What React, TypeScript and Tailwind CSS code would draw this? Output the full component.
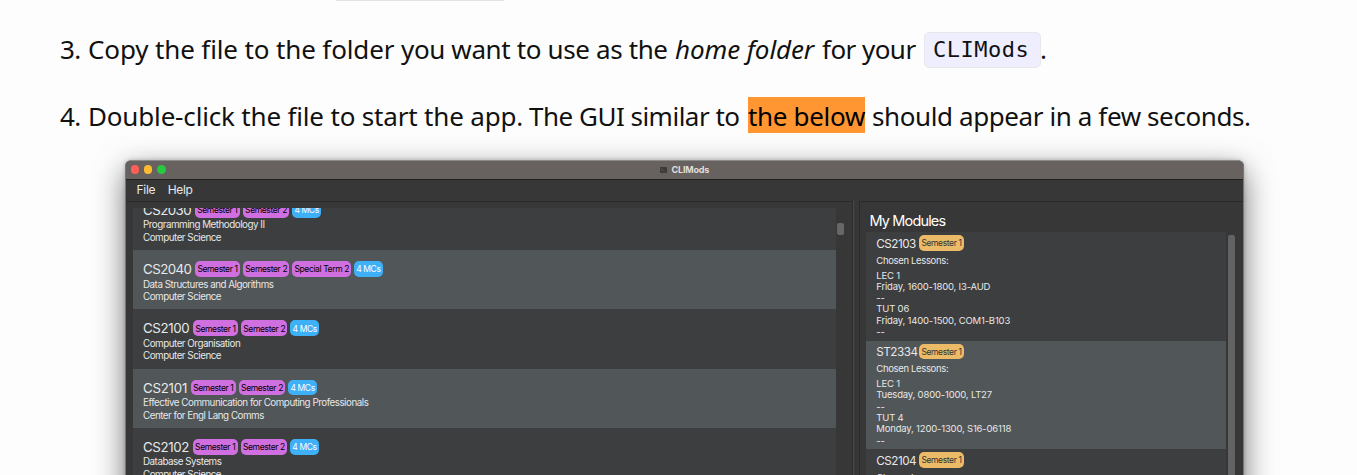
import type { ReactNode } from "react";

type Module = { code: string; tracking: string; tags: string[]; title: string; dept: string };

const modules: Module[] = [
  { code: "CS2030", tracking: "tracking-[-0.55px]", tags: ["Semester 1", "Semester 2"], title: "Programming Methodology II", dept: "Computer Science" },
  { code: "CS2040", tracking: "tracking-[-0.55px]", tags: ["Semester 1", "Semester 2", "Special Term 2"], title: "Data Structures and Algorithms", dept: "Computer Science" },
  { code: "CS2100", tracking: "tracking-[-0.4px]", tags: ["Semester 1", "Semester 2"], title: "Computer Organisation", dept: "Computer Science" },
  { code: "CS2101", tracking: "tracking-[-0.25px]", tags: ["Semester 1", "Semester 2"], title: "Effective Communication for Computing Professionals", dept: "Center for Engl Lang Comms" },
  { code: "CS2102", tracking: "tracking-[-0.4px]", tags: ["Semester 1", "Semester 2"], title: "Database Systems", dept: "Computer Science" },
];

const codeWidths: Record<string, string> = {
  CS2030: "w-[51.8px]",
  CS2040: "w-[52px]",
  CS2100: "w-[50px]",
  CS2101: "w-[47.8px]",
  CS2102: "w-[49.7px]",
};

const tagWidths: Record<string, string> = {
  "Semester 1": "w-[45px]",
  "Semester 2": "w-[46.3px]",
  "Special Term 2": "w-[58.5px]",
};

const chosen = [
  { code: "CS2103", lines: ["LEC 1", "Friday, 1600-1800, I3-AUD", "--", "TUT 06", "Friday, 1400-1500, COM1-B103", "--"] },
  { code: "ST2334", lines: ["LEC 1", "Tuesday, 0800-1000, LT27", "--", "TUT 4", "Monday, 1200-1300, S16-06118", "--"] },
  { code: "CS2104", lines: ["LEC 1"] },
];

function Badge({ className, children }: { className: string; children: ReactNode }) {
  return (
    <span className={`flex h-[15.6px] shrink-0 items-center justify-center rounded-[5px] pt-px text-[8.5px] leading-none tracking-[-0.38px] ${className}`}>
      {children}
    </span>
  );
}

function ModuleRow({ module, shaded }: { module: Module; shaded: boolean }) {
  return (
    <div className={`h-[59.25px] shrink-0 pt-[11px] pl-[10px] ${shaded ? "bg-[#515658]" : "bg-[#3c3e3f]"}`}>
      <div className="flex h-4 items-center gap-[3.1px]">
        <span className={`${codeWidths[module.code]} -mr-[3.1px] text-[13.3px] leading-4 ${module.tracking}`}>{module.code}</span>
        {module.tags.map((tag) => (
          <Badge key={tag} className={`bg-[#d070e0] text-black ${tagWidths[tag]}`}>{tag}</Badge>
        ))}
        <Badge className="w-[28.6px] bg-[#3eb0f7] text-white">4 MCs</Badge>
      </div>
      <div className="pt-[1.6px] text-[9.8px] leading-[12.6px] tracking-[-0.48px]">
        <div>{module.title}</div>
        <div>{module.dept}</div>
      </div>
    </div>
  );
}

export default function App() {
  return (
    <main className="h-[475px] w-full overflow-hidden bg-[#fdfdfd] font-['Noto_Sans',sans-serif] text-[26px] leading-9 text-[#111]">
      <div className="ml-[336px] h-px w-[168px] bg-[#e3e3e3]" />
      <p className="mt-[30px] ml-[60px] flex h-9 whitespace-nowrap">
        <span className="w-[28px] tracking-[-0.5px]">3.</span>
        <span className="w-[313px] tracking-[-0.13px]">Copy the file to the folder</span>
        <span className="w-[274px] tracking-[-0.37px]">you want to use as the</span>
        <em className="w-[147px] tracking-[-0.1px]">home folder</em>
        <span className="w-[102px] tracking-[-0.55px]">for your</span>
        <code className="mt-px flex h-9 w-[117px] items-center rounded-[5px] border border-[#e7e7ee] bg-[#eeeeff] pl-[8px] font-['DejaVu_Sans_Mono',monospace] text-[22px] tracking-[0.5px]">CLIMods</code>
        <span className="-ml-px">.</span>
      </p>
      <p className="mt-[30px] ml-[60px] flex h-9 whitespace-nowrap leading-[38px]">
        <span className="w-[28px] tracking-[-0.5px]">4.</span>
        <span className="w-[441px] tracking-[-0.17px]">Double-click the file to start the app.</span>
        <span className="w-[219px] tracking-[-0.5px]">The GUI similar to</span>
        <mark className="mr-2 w-[117px] bg-[#ff9632] tracking-[-0.32px] text-black">the below</mark>
        <span className="-ml-px tracking-[-0.4px]">should appear in a few seconds.</span>
      </p>

      <section className="mt-[27px] ml-[125px] flex h-[400px] w-[1119px] flex-col overflow-hidden rounded-t-[6px] border border-[#777] border-t-[#8b8b89] bg-[#373737] font-['Inter',sans-serif] text-[#e8e8e8] shadow-[0_10px_30px_rgba(0,0,0,0.55),0_0_4px_rgba(0,0,0,0.2)]">
        <header className="flex h-[19px] shrink-0 items-center border-b border-[#202020] bg-[#67625f] pb-px pl-[5px]">
          <div className="flex gap-[5px]">
            <i className="size-[8.2px] rounded-full bg-[#ff5f57]" />
            <i className="size-[8.2px] rounded-full bg-[#febb2e]" />
            <i className="size-[8.2px] rounded-full bg-[#28c840]" />
          </div>
          <svg className="ml-[494.5px] h-[6px] w-[7px]" viewBox="0 0 7 6">
            <rect width="7" height="6" rx=".8" fill="#3c3a39" />
            <path d="M1.2 1.6l1.2 1-1.2 1M3 4h1.8" stroke="#77716d" strokeWidth=".6" fill="none" />
          </svg>
          <span className="ml-[4.5px] text-[9px] leading-none font-bold tracking-[-0.2px] text-[#e1dddb]">CLIMods</span>
        </header>
        <nav className="flex h-[21px] shrink-0 items-center gap-[12.5px] pb-[2px] pl-[10.5px] text-[12px] leading-none tracking-[-0.3px]">
          <span>File</span>
          <span>Help</span>
        </nav>
        <div className="flex min-h-0 flex-1">
          <div className="flex w-[727px] shrink-0 border-t border-r border-[#2a2a2a] pt-[6px] pl-[7px]">
            <div className="flex w-[703px] flex-col overflow-hidden">
              <div className="-mt-[17.25px] flex flex-col">
                {modules.map((m, i) => (
                  <ModuleRow key={m.code} module={m} shaded={i % 2 === 1} />
                ))}
              </div>
            </div>
            <div className="mt-[15px] ml-[1px] h-[12px] w-[7px] rounded-[2px] bg-[#676767]" />
          </div>
          <div className="w-[6px] shrink-0 border-l border-[#4b4b4b]" />
          <div className="flex min-w-0 flex-1 flex-col border-t border-l border-[#2a2a2a]">
            <h2 className="h-[30px] shrink-0 pt-[10px] pl-[9.5px] text-[14.5px] leading-[18px] tracking-[-0.85px] text-white">My Modules</h2>
            <div className="flex min-h-0 flex-1 pl-[6px]">
              <div className="w-[360px] shrink-0 overflow-hidden">
                {chosen.map((c, i) => (
                  <div key={c.code} className={`h-[108.5px] pt-[3px] pl-[10.3px] ${i % 2 ? "bg-[#515658]" : "bg-[#3c3e3f]"}`}>
                    <div className="flex h-4 items-center">
                      <span className="w-[42.7px] pt-px text-[11.7px] leading-4 tracking-[-0.5px]">{c.code}</span>
                      <Badge className="w-[45px] bg-[#ecbb68] text-[#333]">Semester 1</Badge>
                    </div>
                    <div className="mt-[3.5px] h-[12px] text-[9.5px] leading-[12px] tracking-[-0.34px]">Chosen Lessons:</div>
                    <div className="pt-[3px] text-[9.5px] leading-[11.33px] tracking-[-0.18px]">
                      {c.lines.map((line, j) => (
                        <div key={j}>{line}</div>
                      ))}
                    </div>
                  </div>
                ))}
              </div>
              <div className="mt-[3px] ml-[2px] w-[7px] rounded-t-[2px] bg-[#636363]" />
            </div>
          </div>
        </div>
      </section>
    </main>
  );
}
